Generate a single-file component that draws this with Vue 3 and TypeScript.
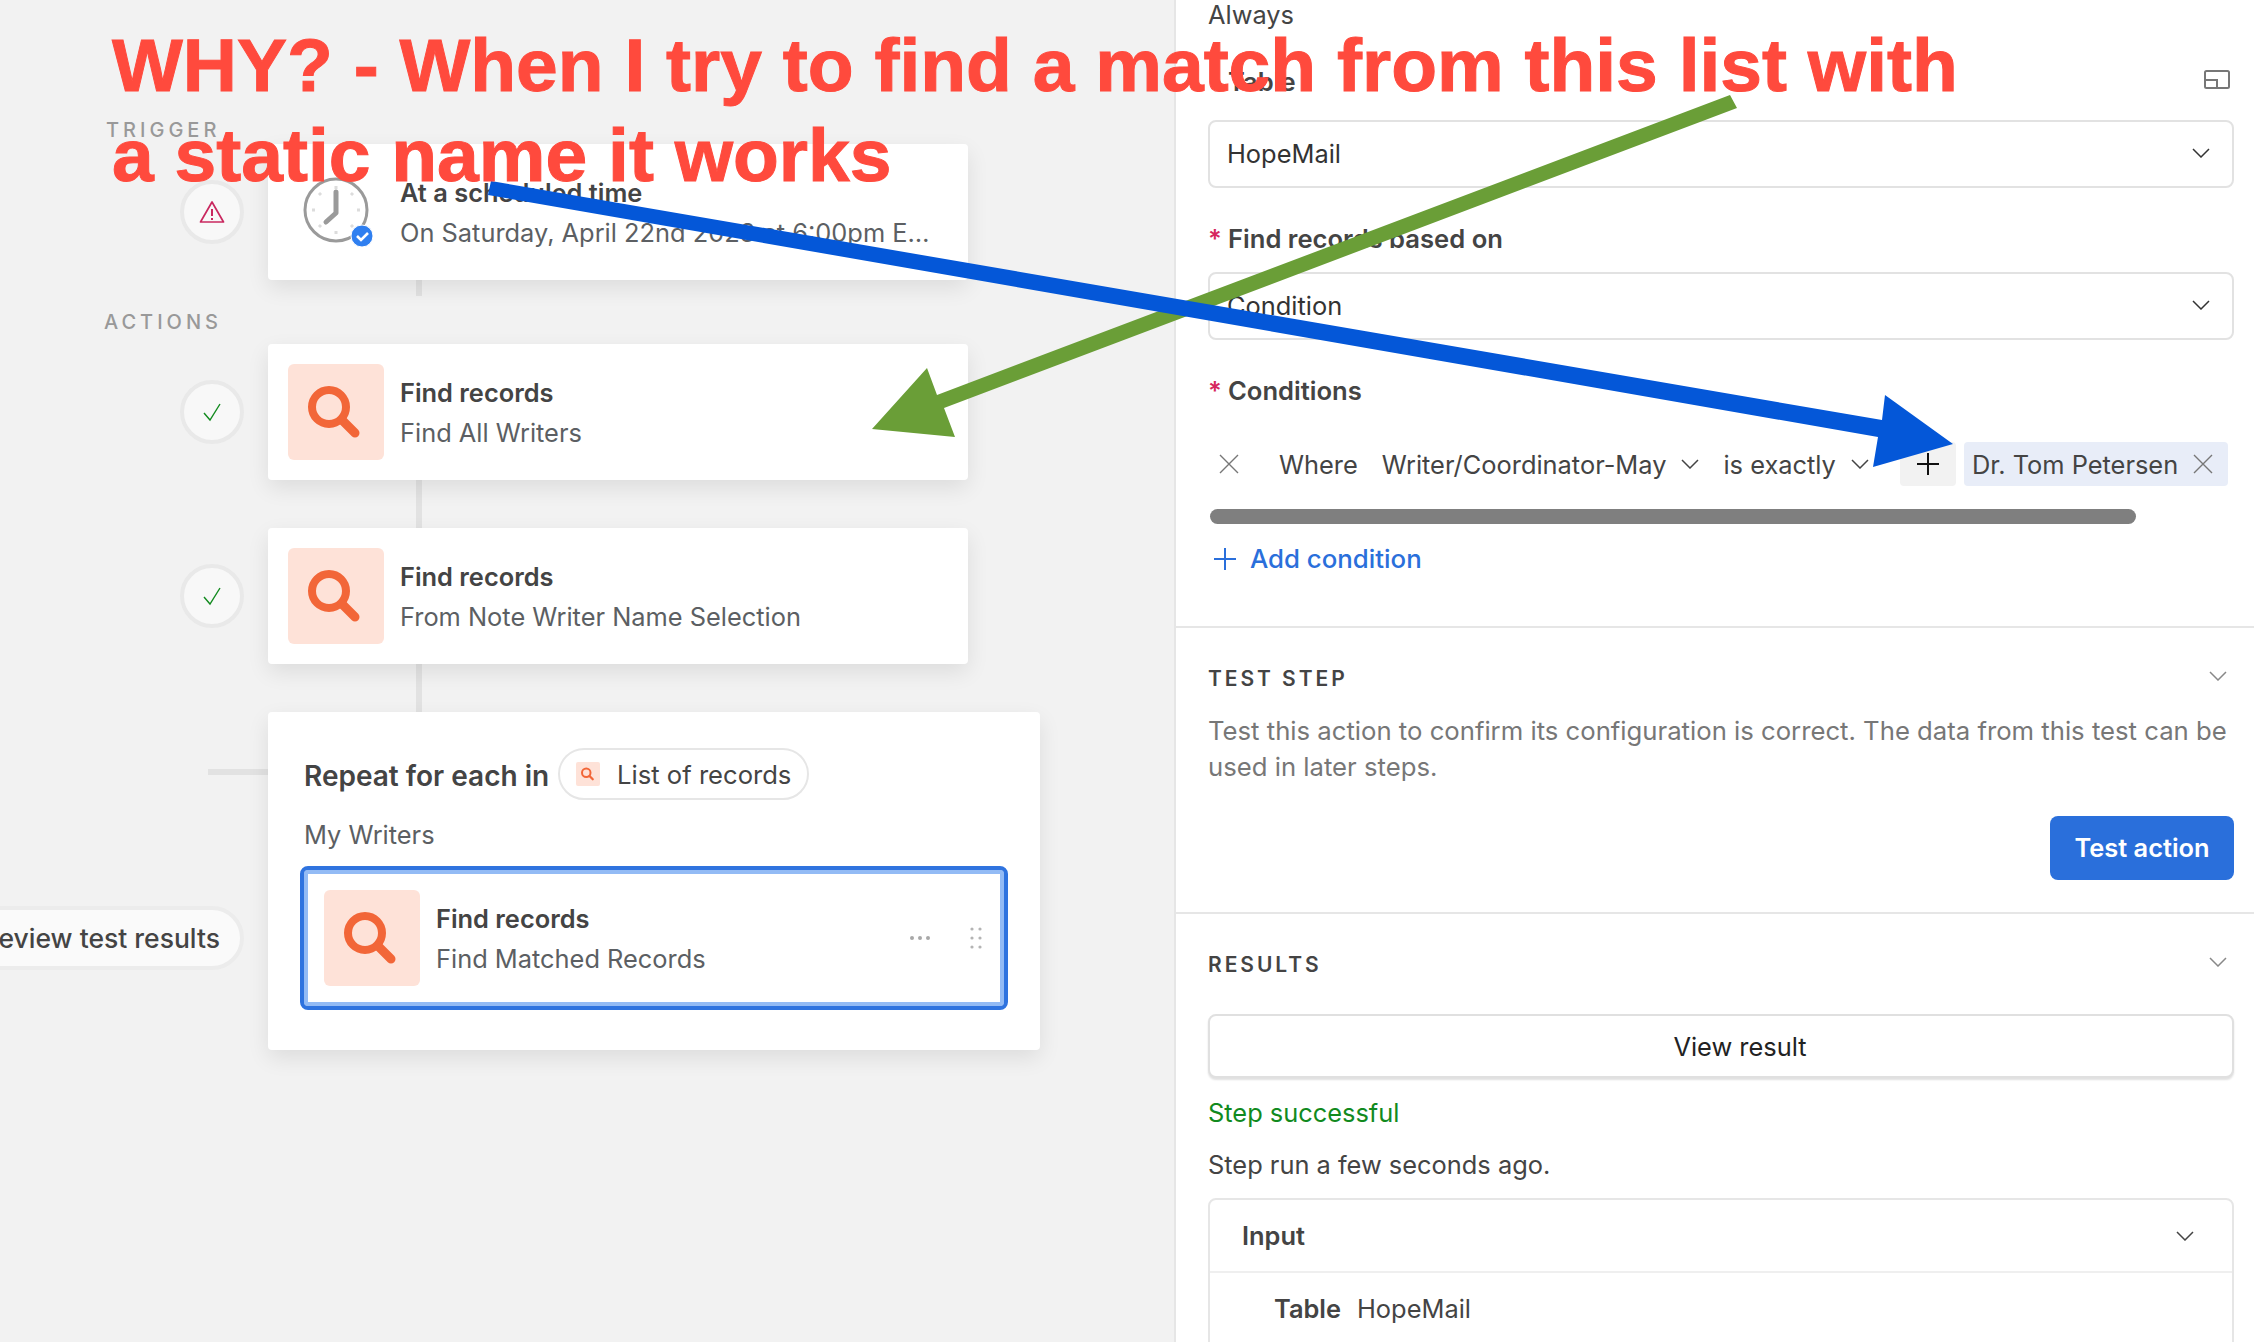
<template>
  <div class="app">
    <svg class="defs" width="0" height="0">
      <symbol id="chev" viewBox="0 0 18 10">
        <path d="M1 1l8 8 8-8" fill="none" stroke="currentColor" stroke-width="1.5" />
      </symbol>
      <symbol id="cross" viewBox="0 0 20 20">
        <path d="M1 1l18 18M19 1L1 19" fill="none" stroke="currentColor" stroke-width="1.4" />
      </symbol>
      <symbol id="search" viewBox="0 0 96 96">
        <circle cx="41" cy="43" r="17" fill="none" stroke="#f26638" stroke-width="8" />
        <path d="M54 56l13 13" fill="none" stroke="#f26638" stroke-width="9" stroke-linecap="round" />
      </symbol>
    </svg>

    <main class="canvas">
      <div class="section-label trigger">TRIGGER</div>
      <div class="step-row">
        <div class="status">
          <svg width="26" height="24" viewBox="0 0 26 24">
            <path d="M13 2L1.5 22h23z" fill="none" stroke="#c9285f" stroke-width="1.7" stroke-linejoin="round" />
            <path d="M13 9v7M13 18v2" fill="none" stroke="#c9285f" stroke-width="2" />
          </svg>
        </div>
        <div class="card">
          <svg class="clock" width="96" height="96" viewBox="0 0 96 96">
            <circle cx="48" cy="46" r="31" fill="#fff" stroke="#9a9a9a" stroke-width="3" />
            <path d="M48 22v3M48 67v3M24 46h3M69 46h3M31 29l2 2M65 29l-2 2M31 63l2-2M65 63l-2-2" stroke="#dcdcdc" stroke-width="3" />
            <path d="M48 28v21l-10 9" fill="none" stroke="#9a9a9a" stroke-width="5" stroke-linecap="round" stroke-linejoin="round" />
            <circle cx="74" cy="72" r="11" fill="#2f7ff0" stroke="#fff" stroke-width="1" />
            <path d="M69 72l4 4 7-7" fill="none" stroke="#fff" stroke-width="2.6" />
          </svg>
          <div class="card-text">
            <div class="card-title">At a scheduled time</div>
            <div class="card-sub">On Saturday, April 22nd 2023 at 6:00pm E…</div>
          </div>
        </div>
      </div>
      <div class="connector short"></div>
      <div class="section-label actions">ACTIONS</div>

      <template v-for="step in steps" :key="step.sub">
        <div class="step-row">
          <div class="status">
            <svg width="20" height="20" viewBox="0 0 20 20">
              <path d="M2 11l6 7L18 2" fill="none" stroke="#118a1e" stroke-width="1.4" />
            </svg>
          </div>
          <div class="card">
            <div class="icon-box"><svg width="96" height="96"><use href="#search" /></svg></div>
            <div class="card-text">
              <div class="card-title">{{ step.title }}</div>
              <div class="card-sub">{{ step.sub }}</div>
            </div>
          </div>
        </div>
        <div class="connector"></div>
      </template>

      <div class="loop-row">
        <div class="loop-gutter">
          <div class="branch"></div>
          <div class="review-pill">Review test results</div>
        </div>
        <div class="loop-card">
          <div class="loop-head">
            <span class="loop-title">Repeat for each in</span>
            <span class="list-pill">
              <span class="mini-icon"><svg width="24" height="24" viewBox="0 0 96 96"><use href="#search" width="96" height="96" /></svg></span>
              List of records
            </span>
          </div>
          <div class="loop-name">My Writers</div>
          <div class="card selected">
            <div class="icon-box"><svg width="96" height="96"><use href="#search" /></svg></div>
            <div class="card-text grow">
              <div class="card-title">Find records</div>
              <div class="card-sub">Find Matched Records</div>
            </div>
            <svg class="more" width="22" height="6" viewBox="0 0 22 6" fill="#a8a8a8">
              <circle cx="3" cy="3" r="2" /><circle cx="11" cy="3" r="2" /><circle cx="19" cy="3" r="2" />
            </svg>
            <svg class="drag" width="12" height="22" viewBox="0 0 12 22" fill="#b4b4b4">
              <circle cx="2" cy="2" r="1.6" /><circle cx="10" cy="2" r="1.6" />
              <circle cx="2" cy="11" r="1.6" /><circle cx="10" cy="11" r="1.6" />
              <circle cx="2" cy="20" r="1.6" /><circle cx="10" cy="20" r="1.6" />
            </svg>
          </div>
        </div>
      </div>
    </main>

    <aside class="panel">
      <section class="block first">
        <div class="always">Always</div>
        <div class="field-label table-label">
          <span>Table</span>
          <svg class="layout-icon" width="26" height="19" viewBox="0 0 26 19">
            <rect x="1" y="1" width="24" height="17" rx="1.5" fill="none" stroke="#777" stroke-width="2" />
            <path d="M1 10h12v8" fill="none" stroke="#777" stroke-width="2" />
          </svg>
        </div>
        <div class="select">HopeMail<svg width="18" height="10"><use href="#chev" /></svg></div>

        <div class="field-label"><i>*</i>Find records based on</div>
        <div class="select">Condition<svg width="18" height="10"><use href="#chev" /></svg></div>

        <div class="field-label"><i>*</i>Conditions</div>
        <div class="cond-row">
          <svg class="cond-x" width="22" height="20"><use href="#cross" /></svg>
          <span class="where">Where</span>
          <span class="cond-field">Writer/Coordinator-May<svg width="18" height="10"><use href="#chev" /></svg></span>
          <span class="cond-op">is exactly<svg width="18" height="10"><use href="#chev" /></svg></span>
          <span class="plus-btn">
            <svg width="24" height="24" viewBox="0 0 24 24"><path d="M12 1v22M1 12h22" stroke="#111" stroke-width="2" /></svg>
          </span>
          <span class="chip">Dr. Tom Petersen<svg width="22" height="20"><use href="#cross" /></svg></span>
        </div>
        <div class="scrollbar"></div>
        <div class="add-cond">
          <svg width="24" height="24" viewBox="0 0 24 24"><path d="M12 1v22M1 12h22" stroke="#2a6fdb" stroke-width="2" /></svg>
          Add condition
        </div>
      </section>

      <section class="block">
        <div class="block-head">TEST STEP<svg width="18" height="10"><use href="#chev" /></svg></div>
        <p class="help">Test this action to confirm its configuration is correct. The data from this test can be used in later steps.</p>
        <div class="btn-row"><button class="primary">Test action</button></div>
      </section>

      <section class="block last">
        <div class="block-head">RESULTS<svg width="18" height="10"><use href="#chev" /></svg></div>
        <button class="view-result">View result</button>
        <div class="success">Step successful</div>
        <div class="run-note">Step run a few seconds ago.</div>
        <div class="input-box">
          <div class="input-head">Input<svg width="18" height="10"><use href="#chev" /></svg></div>
          <div class="input-row"><b>Table</b>HopeMail</div>
        </div>
      </section>
    </aside>

    <!-- annotations drawn on top of the screenshot -->
    <svg class="arrows" width="2254" height="1342" viewBox="0 0 2254 1342">
      <polygon points="1730,95 1737,108 944,408 955,437 872,429 927,368 937,395" fill="#6a9e37" />
      <polygon points="491,181 1882,420 1885,395 1953,444 1873,467 1878,437 488,195" fill="#0457d8" />
    </svg>
    <div class="shout">WHY? - When I try to find a match from this list with<br />a static name it works</div>
  </div>
</template>

<script setup lang="ts">
const steps = [
  { title: 'Find records', sub: 'Find All Writers' },
  { title: 'Find records', sub: 'From Note Writer Name Selection' },
]
</script>

<style>
html,
body {
  margin: 0;
  overflow: hidden;
}
</style>

<style scoped>
.app {
  position: relative;
  display: flex;
  width: 2254px;
  height: 1342px;
  overflow: hidden;
  font-family: Inter, "Liberation Sans", sans-serif;
  font-size: 25.4px;
  color: #444;
}

.defs {
  position: absolute;
}

.canvas {
  width: 1174px;
  flex: none;
  box-sizing: border-box;
  padding-top: 118px;
  background: #f2f2f2;
  overflow: hidden;
}

.section-label {
  font-size: 20px;
  line-height: 24px;
  letter-spacing: 0.2em;
  font-weight: 500;
  color: #999;
}

.trigger {
  margin: 0 0 2px 106px;
}

.actions {
  margin: 14px 0 10px 104px;
}

.step-row {
  display: flex;
  align-items: center;
  padding-left: 180px;
}

.status {
  width: 64px;
  height: 64px;
  margin-right: 24px;
  box-sizing: border-box;
  display: flex;
  align-items: center;
  justify-content: center;
  border: 4px solid #e9e9e9;
  border-radius: 50%;
  background: #f8f8f8;
}

.card {
  display: flex;
  align-items: center;
  gap: 16px;
  width: 700px;
  height: 136px;
  box-sizing: border-box;
  padding: 20px;
  background: #fff;
  border-radius: 4px;
  box-shadow: 0 8px 22px rgba(0, 0, 0, 0.09);
}

.clock {
  flex: none;
}

.icon-box {
  width: 96px;
  height: 96px;
  flex: none;
  border-radius: 6px;
  background: #fee2d8;
}

.icon-box svg {
  display: block;
}

.card-text {
  min-width: 0;
  padding-top: 2px;
}

.card-text.grow {
  flex: 1;
}

.card-title {
  line-height: 40px;
  font-weight: 600;
  white-space: nowrap;
}

.card-sub {
  line-height: 40px;
  color: #5c5f63;
  white-space: nowrap;
}

.connector {
  width: 6px;
  height: 48px;
  margin-left: 416px;
  background: #e2e2e2;
}

.connector.short {
  height: 16px;
}

.loop-row {
  display: flex;
}

.loop-gutter {
  width: 268px;
  flex: none;
  display: flex;
  flex-direction: column;
  align-items: flex-end;
}

.branch {
  width: 60px;
  height: 6px;
  margin-top: 57px;
  background: #e2e2e2;
}

.review-pill {
  width: 290px;
  height: 64px;
  margin: 131px 24px 0 0;
  box-sizing: border-box;
  flex: none;
  padding-right: 20px;
  display: flex;
  align-items: center;
  justify-content: flex-end;
  border: 4px solid #ececec;
  border-radius: 32px;
  background: #fafafa;
  font-size: 26.5px;
  font-weight: 500;
  white-space: nowrap;
}

.loop-card {
  width: 772px;
  height: 338px;
  box-sizing: border-box;
  padding: 36px 32px 0;
  background: #fff;
  border-radius: 4px;
  box-shadow: 0 8px 22px rgba(0, 0, 0, 0.09);
}

.loop-head {
  display: flex;
  align-items: center;
  gap: 9px;
  margin-left: 4px;
}

.loop-title {
  padding-top: 3px;
  font-size: 28px;
  font-weight: 600;
}

.list-pill {
  display: flex;
  align-items: center;
  gap: 17px;
  height: 52px;
  box-sizing: border-box;
  padding: 0 16px;
  border: 2px solid #e6e6e6;
  border-radius: 26px;
  font-size: 25.6px;
}

.mini-icon {
  width: 24px;
  height: 24px;
  background: #fee2d8;
  border-radius: 2px;
}

.mini-icon svg {
  display: block;
}

.loop-name {
  margin: 19px 0 0 4px;
  line-height: 32px;
  color: #5c5f63;
}

.selected {
  width: 708px;
  height: 144px;
  margin-top: 15px;
  border: 4px solid #2f73df;
  border-radius: 8px;
  box-shadow: inset 0 0 0 4px #93bbf5;
}

.more {
  margin-right: 23px;
}

.drag {
  margin-right: 2px;
}

.panel {
  flex: 1;
  min-width: 0;
  box-sizing: border-box;
  background: #fff;
  border-left: 2px solid #e6e6e6;
}

.block {
  padding: 35px 20px 32px 32px;
  border-bottom: 2px solid #e6e6e6;
}

.block.first {
  height: 628px;
  box-sizing: border-box;
  padding-top: 0;
  padding-bottom: 0;
}

.block.last {
  border-bottom: 0;
}

.always {
  line-height: 30px;
}

.field-label {
  margin: 35px 0 17px;
  font-size: 25.6px;
  line-height: 32px;
  font-weight: 600;
}

.field-label i {
  display: inline-block;
  width: 20px;
  font-style: normal;
  color: #d6275e;
}

.table-label {
  position: relative;
  margin: 36px 0 22px;
  padding-left: 20px;
}

.layout-icon {
  position: absolute;
  right: 4px;
  top: 4px;
}

.select {
  display: flex;
  align-items: center;
  justify-content: space-between;
  height: 68px;
  box-sizing: border-box;
  padding: 0 22px 2px 17px;
  border: 2px solid #e2e2e2;
  border-radius: 8px;
  color: #333;
}

.cond-row {
  display: flex;
  align-items: center;
  height: 44px;
  margin-top: 35px;
  white-space: nowrap;
}

.cond-x {
  margin-left: 10px;
  color: #777;
}

.where {
  margin-left: 39px;
}

.cond-field,
.cond-op {
  display: flex;
  align-items: center;
  gap: 15px;
  margin-left: 24px;
}

.plus-btn {
  width: 56px;
  height: 44px;
  margin-left: 31px;
  display: flex;
  align-items: center;
  justify-content: center;
  background: #f2f2f2;
  border-radius: 4px;
}

.chip {
  display: flex;
  align-items: center;
  gap: 14px;
  height: 44px;
  margin-left: 8px;
  padding: 0 14px 0 8px;
  background: #e8edf8;
  border-radius: 4px;
}

.chip svg {
  color: #777;
}

.scrollbar {
  width: 926px;
  height: 15px;
  margin: 23px 0 0 2px;
  background: #7f7f7f;
  border-radius: 8px;
}

.add-cond {
  display: flex;
  align-items: center;
  gap: 13px;
  margin: 19px 0 0 5px;
  font-size: 25.8px;
  line-height: 32px;
  font-weight: 500;
  color: #2a6fdb;
}

.block-head {
  display: flex;
  align-items: center;
  justify-content: space-between;
  padding-right: 7px;
  line-height: 32px;
  font-size: 21px;
  font-weight: 600;
  letter-spacing: 0.14em;
}

.block-head svg {
  color: #888;
  margin-top: -6px;
}

.help {
  margin: 18px 0 0;
  font-size: 25.7px;
  line-height: 36px;
  color: #777;
}

.btn-row {
  display: flex;
  justify-content: flex-end;
  margin-top: 31px;
}

.primary {
  width: 184px;
  height: 64px;
  padding-bottom: 2px;
  border: 0;
  border-radius: 8px;
  background: #2a6fdb;
  color: #fff;
  font: 600 25.4px Inter, "Liberation Sans", sans-serif;
}

.view-result {
  display: block;
  width: 100%;
  height: 64px;
  margin-top: 33px;
  padding-left: 44px;
  border: 2px solid #e0e0e0;
  border-radius: 8px;
  background: #fff;
  color: #222;
  font: 25.4px Inter, "Liberation Sans", sans-serif;
  box-shadow: 0 2px 2px rgba(0, 0, 0, 0.12);
}

.success {
  margin-top: 19px;
  line-height: 32px;
  color: #118a1e;
}

.run-note {
  margin-top: 20px;
  line-height: 32px;
}

.input-box {
  margin-top: 17px;
  height: 300px;
  border: 2px solid #e6e6e6;
  border-radius: 8px;
}

.input-head {
  display: flex;
  align-items: center;
  justify-content: space-between;
  height: 73px;
  box-sizing: border-box;
  padding: 0 38px 0 32px;
  border-bottom: 2px solid #efefef;
  font-weight: 600;
}

.input-row {
  padding: 20px 0 0 64px;
  line-height: 32px;
}

.input-row b {
  margin-right: 16px;
  font-weight: 600;
}

.arrows {
  position: absolute;
  left: 0;
  top: 0;
  pointer-events: none;
}

.shout {
  position: absolute;
  left: 112px;
  top: 20px;
  font-family: "Liberation Sans", Arial, sans-serif;
  font-size: 75px;
  line-height: 90px;
  font-weight: 700;
  -webkit-text-stroke: 1px #ff4a3d;
  color: #ff4a3d;
  white-space: nowrap;
  pointer-events: none;
}
</style>
